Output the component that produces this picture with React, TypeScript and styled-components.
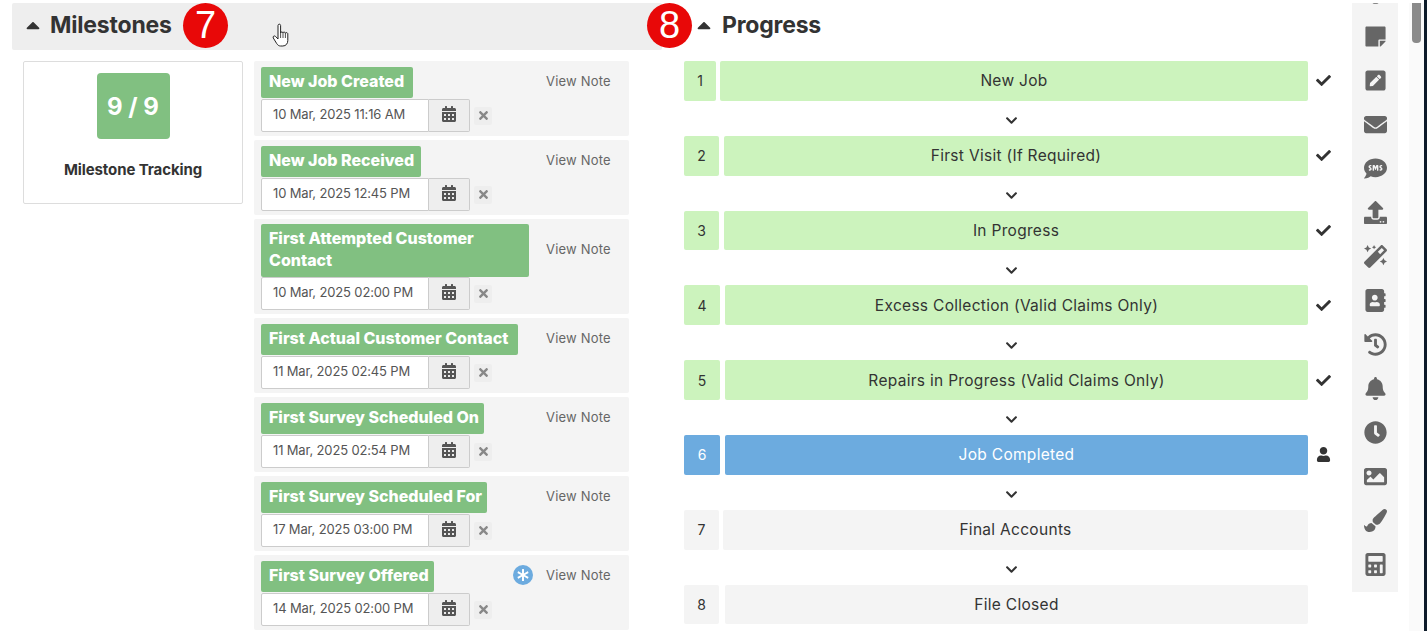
import React from 'react';
import styled, { createGlobalStyle } from 'styled-components';
import {
  FaAddressBook, FaAsterisk, FaBell, FaCalculator, FaCalendarAlt, FaCaretUp, FaCheck, FaChevronDown,
  FaClock, FaCog, FaEnvelope, FaHistory, FaImage, FaMagic, FaPaintBrush, FaPenSquare, FaSms,
  FaStickyNote, FaTimes, FaUpload, FaUser,
} from 'react-icons/fa';

const GlobalStyle = createGlobalStyle`
  html, body { margin: 0; padding: 0; background: #fff; overflow: hidden; }
  * { box-sizing: border-box; }
  body { font-family: Inter, "Open Sans", "Liberation Sans", sans-serif; color: #333; }
`;

const Page = styled.div`
  position: relative;
  display: flex;
  height: 631px;
  width: 1427px;
  overflow: hidden;
  padding-top: 3px;
`;

const LeftColumn = styled.section`
  width: 650px;
  margin-left: 12px;
  flex-shrink: 0;
`;

const RightColumn = styled.section`
  width: 656px;
  margin-left: 22px;
  flex-shrink: 0;
`;

const SectionHead = styled.header<{ $shaded?: boolean }>`
  display: flex;
  align-items: center;
  height: 47px;
  padding-left: ${(p) => (p.$shaded ? '14px' : '13px')};
  padding-bottom: 3px;
  background: ${(p) => (p.$shaded ? '#eeeeee' : 'transparent')};
  border-radius: 2px;
  svg { width: 14px; height: 22px; color: #333; flex-shrink: 0; }
`;

const SectionTitle = styled.h2<{ $gap: number }>`
  margin: 0 0 0 ${(p) => p.$gap}px;
  font-size: 23px;
  font-weight: 700;
  letter-spacing: -0.2px;
  color: #333;
`;

const MilestoneBody = styled.div`
  display: flex;
  padding: 11px 0 0 11px;
  gap: 11px;
`;

const TrackingCard = styled.div`
  width: 220px;
  height: 143px;
  border: 1px solid #dddddd;
  border-radius: 2px;
  background: #fff;
  display: flex;
  flex-direction: column;
  align-items: center;
  padding-top: 11px;
  flex-shrink: 0;
`;

const Score = styled.div`
  width: 73px;
  height: 66px;
  background: #81c081;
  border-radius: 4px;
  color: #fff;
  font-size: 24px;
  font-weight: 700;
  display: flex;
  align-items: center;
  justify-content: center;
`;

const TrackingLabel = styled.div`
  margin-top: 21px;
  font-size: 15px;
  font-weight: 700;
  letter-spacing: -0.1px;
  color: #333;
`;

const MilestoneList = styled.div`
  width: 375px;
  display: flex;
  flex-direction: column;
  gap: 4px;
`;

const MilestoneRow = styled.div`
  background: #f4f4f4;
  border-radius: 2px;
  padding: 5px 0 4px 7px;
`;

const RowTop = styled.div`
  display: flex;
  align-items: center;
  min-height: 33px;
`;

const MilestoneLabel = styled.div<{ $w: number }>`
  width: ${(p) => p.$w}px;
  background: #81c081;
  color: #fff;
  font-size: 16px;
  font-weight: 800;
  line-height: 22px;
  white-space: pre;
  padding: 3px 0 6px 8px;
  border-radius: 2px;
`;

const NoteArea = styled.div`
  margin-left: auto;
  display: flex;
  align-items: center;
  padding-right: 18px;
  padding-bottom: 3px;
`;

const NoteBadge = styled.span`
  width: 20px;
  height: 20px;
  border-radius: 50%;
  background: #6cabdf;
  color: #fff;
  display: flex;
  align-items: center;
  justify-content: center;
  margin-right: 13px;
  svg { width: 12px; height: 12px; }
`;

const ViewNote = styled.span`
  font-size: 13px;
  letter-spacing: 0.2px;
  color: #666;
  width: 65px;
  white-space: nowrap;
`;

const DateLine = styled.div`
  display: flex;
  align-items: center;
`;

const DateInput = styled.div`
  width: 168px;
  height: 33px;
  border: 1px solid #cccccc;
  border-radius: 2px 0 0 2px;
  background: #fff;
  font-size: 13px;
  letter-spacing: -0.15px;
  color: #555;
  display: flex;
  align-items: center;
  padding: 0 0 3px 11px;
  white-space: nowrap;
`;

const CalendarAddon = styled.div`
  width: 41px;
  height: 33px;
  border: 1px solid #cccccc;
  border-left: 0;
  border-radius: 0 2px 2px 0;
  background: #eeeeee;
  color: #555;
  display: flex;
  align-items: center;
  justify-content: center;
  padding-bottom: 3px;
  svg { width: 14px; height: 16px; }
`;

const ClearButton = styled.div`
  width: 18px;
  height: 18px;
  margin-left: 4px;
  background: #eeeeee;
  border-radius: 2px;
  color: #888;
  display: flex;
  align-items: center;
  justify-content: center;
  svg { width: 13px; height: 13px; }
`;

const Steps = styled.div`
  padding-top: 11px;
  width: 655px;
`;

const StepRow = styled.div`
  display: flex;
  align-items: stretch;
  height: 39.8px;
`;

type Tone = 'done' | 'active' | 'todo';

const toneBg = { done: '#ccf3bd', active: '#6cabdf', todo: '#f4f4f4' };

const StepNumber = styled.div<{ $tone: Tone; $w: number }>`
  width: ${(p) => p.$w}px;
  background: ${(p) => toneBg[p.$tone]};
  color: ${(p) => (p.$tone === 'active' ? '#fff' : '#333')};
  border-radius: 2px;
  font-size: 14px;
  display: flex;
  align-items: center;
  justify-content: center;
  flex-shrink: 0;
`;

const StepBar = styled.div<{ $tone: Tone; $left: number }>`
  margin-left: ${(p) => p.$left}px;
  flex: 1;
  background: ${(p) => toneBg[p.$tone]};
  color: ${(p) => (p.$tone === 'active' ? '#fff' : '#333')};
  border-radius: 2px;
  font-size: 15.5px;
  letter-spacing: 0.3px;
  display: flex;
  align-items: center;
  justify-content: center;
`;

const StepStatus = styled.div`
  width: 31px;
  flex-shrink: 0;
  display: flex;
  align-items: center;
  justify-content: center;
  color: #333;
  svg { width: 15px; height: 15px; }
`;

const StepArrow = styled.div`
  height: 35px;
  display: flex;
  align-items: center;
  justify-content: center;
  padding-top: 5px;
  color: #333;
  svg { width: 13px; height: 13px; }
`;

const ToolRail = styled.aside`
  width: 46px;
  height: 589px;
  margin-left: 12px;
  background: #f4f4f4;
  overflow: hidden;
  display: flex;
  flex-direction: column;
  align-items: center;
  flex-shrink: 0;
  color: #666;
`;

const ToolIcon = styled.div<{ $lift?: boolean }>`
  height: 44px;
  flex-shrink: 0;
  display: flex;
  align-items: center;
  justify-content: center;
  margin-top: ${(p) => (p.$lift ? '-33px' : '0')};
  svg { width: 23px; height: 23px; }
`;

const ScrollTrack = styled.div`
  width: 15px;
  height: 628px;
  margin-left: 11px;
  background: #fafafa;
  flex-shrink: 0;
  padding-left: 3px;
`;

const ScrollThumb = styled.div`
  width: 9px;
  height: 40px;
  background: #8a8a8a;
  border-radius: 0 0 4px 4px;
`;

const WindowEdge = styled.div`
  width: 3px;
  margin-top: -3px;
  height: 631px;
  background: #0d1b2a;
  flex-shrink: 0;
`;

const Marker = styled.div<{ $x: number }>`
  position: absolute;
  top: 3px;
  left: ${(p) => p.$x}px;
  width: 45px;
  height: 45px;
  border-radius: 50%;
  background: #e80808;
  color: #fff;
  font-family: "Liberation Sans", Arial, sans-serif;
  font-size: 38px;
  display: flex;
  align-items: center;
  justify-content: center;
`;

const HandCursor = styled.svg`
  position: absolute;
  left: 272px;
  top: 23px;
  width: 18px;
  height: 25px;
`;

const milestones = [
  { label: 'New Job Created', w: 152, date: '10 Mar, 2025 11:16 AM' },
  { label: 'New Job Received', w: 160, date: '10 Mar, 2025 12:45 PM' },
  { label: 'First Attempted Customer\nContact', w: 268, date: '10 Mar, 2025 02:00 PM' },
  { label: 'First Actual Customer Contact', w: 257, date: '11 Mar, 2025 02:45 PM' },
  { label: 'First Survey Scheduled On', w: 223, date: '11 Mar, 2025 02:54 PM' },
  { label: 'First Survey Scheduled For', w: 226, date: '17 Mar, 2025 03:00 PM' },
  { label: 'First Survey Offered', w: 173, date: '14 Mar, 2025 02:00 PM', flagged: true },
];

const steps: { name: string; tone: Tone; w: number; left: number }[] = [
  { name: 'New Job', tone: 'done', w: 32, left: 4 },
  { name: 'First Visit (If Required)', tone: 'done', w: 35, left: 5 },
  { name: 'In Progress', tone: 'done', w: 35, left: 5 },
  { name: 'Excess Collection (Valid Claims Only)', tone: 'done', w: 36, left: 5 },
  { name: 'Repairs in Progress (Valid Claims Only)', tone: 'done', w: 36, left: 5 },
  { name: 'Job Completed', tone: 'active', w: 36, left: 5 },
  { name: 'Final Accounts', tone: 'todo', w: 35, left: 4 },
  { name: 'File Closed', tone: 'todo', w: 35, left: 6 },
];

const tools = [
  FaStickyNote, FaPenSquare, FaEnvelope, FaSms, FaUpload, FaMagic, FaAddressBook,
  FaHistory, FaBell, FaClock, FaImage, FaPaintBrush, FaCalculator,
];

const App: React.FC = () => {
  return (
    <Page>
      <GlobalStyle />
      <LeftColumn>
        <SectionHead $shaded>
          <FaCaretUp />
          <SectionTitle $gap={10}>Milestones</SectionTitle>
        </SectionHead>
        <MilestoneBody>
          <TrackingCard>
            <Score>9 / 9</Score>
            <TrackingLabel>Milestone Tracking</TrackingLabel>
          </TrackingCard>
          <MilestoneList>
            {milestones.map((m) => (
              <MilestoneRow key={m.label}>
                <RowTop>
                  <MilestoneLabel $w={m.w}>{m.label}</MilestoneLabel>
                  <NoteArea>
                    {m.flagged && <NoteBadge><FaAsterisk /></NoteBadge>}
                    <ViewNote>View Note</ViewNote>
                  </NoteArea>
                </RowTop>
                <DateLine>
                  <DateInput>{m.date}</DateInput>
                  <CalendarAddon><FaCalendarAlt /></CalendarAddon>
                  <ClearButton><FaTimes /></ClearButton>
                </DateLine>
              </MilestoneRow>
            ))}
          </MilestoneList>
        </MilestoneBody>
      </LeftColumn>
      <RightColumn>
        <SectionHead>
          <FaCaretUp />
          <SectionTitle $gap={11}>Progress</SectionTitle>
        </SectionHead>
        <Steps>
          {steps.map((s, i) => (
            <React.Fragment key={s.name}>
              <StepRow>
                <StepNumber $tone={s.tone} $w={s.w}>{i + 1}</StepNumber>
                <StepBar $tone={s.tone} $left={s.left}>{s.name}</StepBar>
                <StepStatus>
                  {s.tone === 'done' && <FaCheck />}
                  {s.tone === 'active' && <FaUser />}
                </StepStatus>
              </StepRow>
              {i < steps.length - 1 && <StepArrow><FaChevronDown /></StepArrow>}
            </React.Fragment>
          ))}
        </Steps>
      </RightColumn>
      <ToolRail>
        <ToolIcon $lift><FaCog /></ToolIcon>
        {tools.map((Icon, i) => (
          <ToolIcon key={i}><Icon /></ToolIcon>
        ))}
      </ToolRail>
      <ScrollTrack><ScrollThumb /></ScrollTrack>
      <WindowEdge />
      <Marker $x={183}>7</Marker>
      <Marker $x={647}>8</Marker>
      <HandCursor viewBox="0 0 18 25">
        <path
          d="M6 2.5c0-1.8 2.6-1.8 2.6 0V10c0-1.4 2.4-1.4 2.4 0 0-1.2 2.4-1.2 2.4.3 0-1 2.4-1 2.4.6v6.6c0 3-1.8 5.5-5 5.5H8.6c-1.8 0-3-1-4-2.6L1.3 15c-.9-1.5 1-2.8 2.2-1.6L6 16z"
          fill="#fff"
          stroke="#222"
          strokeWidth="1"
        />
        <path d="M8.6 10v5M11 10v5M13.4 10.3V15" stroke="#222" strokeWidth=".8" fill="none" />
      </HandCursor>
    </Page>
  );
};

export default App;
